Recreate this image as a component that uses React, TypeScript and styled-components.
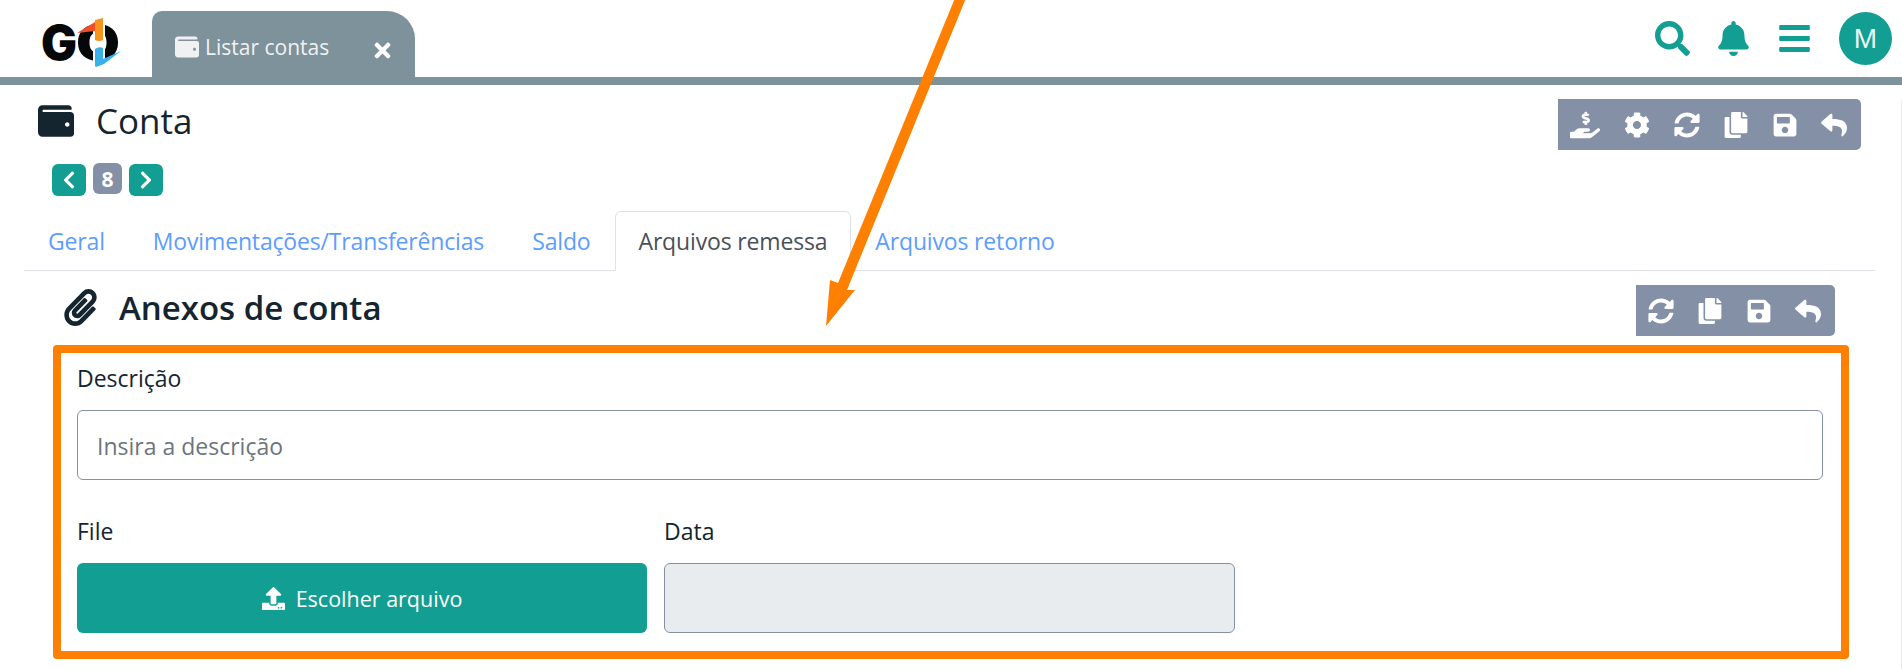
import React from 'react';
import styled, { createGlobalStyle } from 'styled-components';
import {
  FaWallet, FaSearch, FaBell, FaBars, FaHandHoldingUsd, FaCog, FaSyncAlt, FaCopy, FaSave, FaReply,
  FaPaperclip, FaUpload, FaChevronLeft, FaChevronRight, FaTimes,
} from 'react-icons/fa';

const Global = createGlobalStyle`
  html, body { margin: 0; padding: 0; background: #fff; overflow: hidden; }
  body { font-family: "Open Sans", "Noto Sans", "Liberation Sans", sans-serif; color: #15252f; }
  * { box-sizing: border-box; }
`;

const teal = '#129e92';
const slate = '#7e929c';

const Page = styled.div`
  position: relative;
  width: 1902px;
  height: 669px;
  overflow: hidden;
`;

const Header = styled.header`
  display: flex;
  align-items: flex-end;
  height: 85px;
  border-bottom: 8px solid ${slate};
  padding-left: 42px;
`;

const LogoMark = styled.svg`
  width: 82px;
  height: 77px;
  flex: none;
`;

const OpenTab = styled.div`
  display: flex;
  align-items: center;
  width: 263px;
  height: 66px;
  margin-left: 28px;
  padding: 5px 0 0 23px;
  background: ${slate};
  border-radius: 10px 28px 0 0;
  color: #f1f1f1;
  font-size: 21px;
  svg { flex: none; }
`;

const OpenTabLabel = styled.span`
  margin-left: 6px;
  flex: 1;
`;

const CloseMark = styled.span`
  display: flex;
  color: #fff;
  margin: 7px 21px 0 0;
`;

const HeaderActions = styled.div`
  display: flex;
  align-items: center;
  margin-left: auto;
  height: 77px;
  padding-right: 10px;
  color: ${teal};
  svg { display: block; }
`;

const ActionSlot = styled.span`
  display: flex;
  justify-content: center;
  width: 61px;
`;

const Avatar = styled.div`
  display: flex;
  align-items: center;
  justify-content: center;
  width: 53px;
  height: 53px;
  margin-left: 14px;
  border-radius: 50%;
  background: ${teal};
  color: #e8f6f4;
  font-size: 28px;
  font-family: "Liberation Sans", sans-serif;
`;

const Main = styled.main`
  height: 584px;
  border-right: 1px solid #eeeeee;
`;

const TitleRow = styled.div`
  display: flex;
  align-items: center;
  justify-content: space-between;
  height: 51px;
  margin-top: 14px;
  padding: 0 40px 0 38px;
`;

const PageTitle = styled.h1`
  display: flex;
  align-items: center;
  gap: 22px;
  margin: 0;
  font-size: 35px;
  font-weight: 400;
  line-height: 1;
  position: relative;
  top: -4px;
`;

const Toolbar = styled.div`
  display: flex;
  align-items: center;
  justify-content: flex-end;
  height: 51px;
  padding-right: 2.5px;
  background: #8490a6;
  border-radius: 0 5px 5px 0;
  color: #fff;
  svg { display: block; }
`;

const ToolSlot = styled.span<{ $w?: number }>`
  display: flex;
  justify-content: center;
  width: ${p => p.$w ?? 49}px;
`;

const Pager = styled.div`
  display: flex;
  align-items: center;
  gap: 7px;
  height: 33px;
  margin-top: 13px;
  padding-left: 52px;
`;

const PagerButton = styled.button`
  display: flex;
  align-items: center;
  justify-content: center;
  width: 34px;
  height: 32px;
  padding: 0;
  border: 0;
  border-radius: 6px;
  background: ${teal};
  color: #fff;
`;

const PagerCount = styled.span`
  display: flex;
  align-items: center;
  justify-content: center;
  width: 29px;
  height: 31px;
  margin-top: -2px;
  border-radius: 6px;
  background: #8490a6;
  color: #fff;
  font-size: 21px;
  font-weight: 700;
`;

const TabList = styled.nav`
  display: flex;
  height: 60px;
  margin: 15px 26px 0 24px;
  border-bottom: 1px solid #dee2e6;
`;

const TabItem = styled.a<{ $active?: boolean }>`
  display: flex;
  align-items: center;
  height: 60px;
  padding: 0 23px;
  font-size: 23px;
  letter-spacing: -0.16px;
  color: ${p => (p.$active ? '#495057' : '#5c9dff')};
  background: ${p => (p.$active ? '#fff' : 'transparent')};
  border: 1px solid ${p => (p.$active ? '#dee2e6' : 'transparent')};
  border-bottom-color: ${p => (p.$active ? '#fff' : 'transparent')};
  border-radius: 6px 6px 0 0;
`;

const SectionRow = styled.div`
  display: flex;
  align-items: center;
  justify-content: space-between;
  height: 51px;
  margin-top: 14px;
  padding: 0 66px 0 62px;
`;

const SectionTitle = styled.h2`
  display: flex;
  align-items: center;
  gap: 20px;
  margin: 0;
  font-size: 33px;
  font-weight: 600;
  line-height: 1;
  position: relative;
  top: -3px;
`;

const FormBox = styled.div`
  width: 1796px;
  height: 314px;
  margin: 9px 0 0 53px;
  padding: 7px 18px 0 16px;
  border: 8px solid #ff7f00;
  border-radius: 4px;
`;

const FieldLabel = styled.label`
  display: block;
  height: 50px;
  padding-top: 3px;
  font-size: 23px;
  line-height: 30px;
`;

const TextInput = styled.div`
  display: flex;
  align-items: center;
  height: 70px;
  padding: 1px 19px 0;
  border: 1px solid #8490a6;
  border-radius: 6px;
  color: #6c757d;
  font-size: 23px;
`;

const FieldGrid = styled.div`
  display: grid;
  grid-template-columns: 570px 571px 1fr;
  column-gap: 17px;
  margin-top: 33px;
`;

const FieldColumn = styled.div`
  display: flex;
  flex-direction: column;
`;

const ChooseFile = styled.button`
  display: flex;
  align-items: center;
  justify-content: center;
  gap: 11px;
  height: 70px;
  padding: 0;
  border: 0;
  border-radius: 6px;
  background: ${teal};
  color: #fff;
  font-family: inherit;
  font-size: 21.5px;
`;

const DisabledInput = styled.div`
  height: 70px;
  border: 1px solid #8490a6;
  border-radius: 6px;
  background: #e9ecef;
`;

const ArrowOverlay = styled.svg`
  position: absolute;
  inset: 0;
  pointer-events: none;
`;

const Logo = () => (
  <LogoMark viewBox="0 0 82 77">
    <text x="-1" y="60" fontFamily="Inter, sans-serif" fontWeight="900" fontSize="48" textLength="36" lengthAdjust="spacingAndGlyphs" fill="#050708">G</text>
    <text x="34" y="60" fontFamily="Inter, sans-serif" fontWeight="900" fontSize="48" textLength="44" lengthAdjust="spacingAndGlyphs" fill="#050708">O</text>
    <path d="M51 20h12v47H51z" fill="#fff" />
    <path d="M35 33 L53 22 L53 31 Z" fill="#ef4f26" />
    <path d="M53 20 L61 18 L61 40 Q57 42 53 40 Z" fill="#f7941e" />
    <path d="M53 49 Q57 46 61 48 L61 59 L79 51 L62 64 L54 67 L53 66 Z" fill="#38b0e8" />
  </LogoMark>
);

const Tools = ({ withExtra }: { withExtra?: boolean }) => (
  <>
    {withExtra && <ToolSlot $w={52}><FaHandHoldingUsd size={30} /></ToolSlot>}
    {withExtra && <ToolSlot $w={52}><FaCog size={26} /></ToolSlot>}
    <ToolSlot><FaSyncAlt size={26} /></ToolSlot>
    <ToolSlot><FaCopy size={26} /></ToolSlot>
    <ToolSlot><FaSave size={26} /></ToolSlot>
    <ToolSlot><FaReply size={26} /></ToolSlot>
  </>
);

export default function App() {
  return (
    <Page>
      <Global />
      <Header>
        <Logo />
        <OpenTab>
          <FaWallet size={24} />
          <OpenTabLabel>Listar contas</OpenTabLabel>
          <CloseMark><FaTimes size={23} /></CloseMark>
        </OpenTab>
        <HeaderActions>
          <ActionSlot><FaSearch size={35} /></ActionSlot>
          <ActionSlot><FaBell size={35} /></ActionSlot>
          <ActionSlot><FaBars size={35} /></ActionSlot>
          <Avatar>M</Avatar>
        </HeaderActions>
      </Header>
      <Main>
        <TitleRow>
          <PageTitle><FaWallet size={36} />Conta</PageTitle>
          <Toolbar style={{ width: 303 }}><Tools withExtra /></Toolbar>
        </TitleRow>
        <Pager>
          <PagerButton><FaChevronLeft size={20} /></PagerButton>
          <PagerCount>8</PagerCount>
          <PagerButton><FaChevronRight size={20} /></PagerButton>
        </Pager>
        <TabList>
          <TabItem>Geral</TabItem>
          <TabItem>Movimentações/Transferências</TabItem>
          <TabItem>Saldo</TabItem>
          <TabItem $active>Arquivos remessa</TabItem>
          <TabItem>Arquivos retorno</TabItem>
        </TabList>
        <SectionRow>
          <SectionTitle><FaPaperclip size={37} />Anexos de conta</SectionTitle>
          <Toolbar style={{ width: 199 }}><Tools /></Toolbar>
        </SectionRow>
        <FormBox>
          <FieldLabel>Descrição</FieldLabel>
          <TextInput>Insira a descrição</TextInput>
          <FieldGrid>
            <FieldColumn>
              <FieldLabel>File</FieldLabel>
              <ChooseFile><FaUpload size={23} />Escolher arquivo</ChooseFile>
            </FieldColumn>
            <FieldColumn>
              <FieldLabel>Data</FieldLabel>
              <DisabledInput />
            </FieldColumn>
          </FieldGrid>
        </FormBox>
      </Main>
      <ArrowOverlay viewBox="0 0 1902 669" width="1902" height="669">
        <path d="M955 -2 L966 -2 L847 290 L855 290 L826 326 L830 280 L838 283 Z" fill="#ff7f00" />
      </ArrowOverlay>
    </Page>
  );
}
